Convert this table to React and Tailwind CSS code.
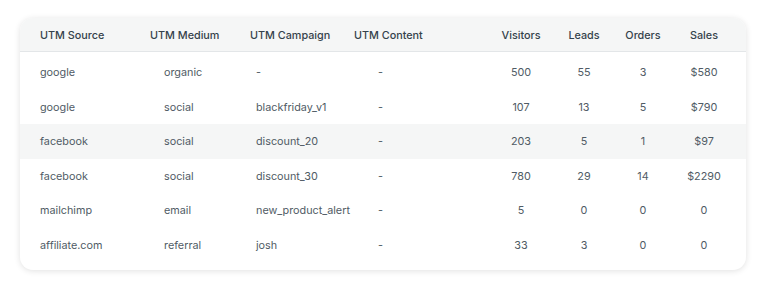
const rows = [
  ["google", "organic", "-", "-", "500", "55", "3", "$580"],
  ["google", "social", "blackfriday_v1", "-", "107", "13", "5", "$790"],
  ["facebook", "social", "discount_20", "-", "203", "5", "1", "$97"],
  ["facebook", "social", "discount_30", "-", "780", "29", "14", "$2290"],
  ["mailchimp", "email", "new_product_alert", "-", "5", "0", "0", "0"],
  ["affiliate.com", "referral", "josh", "-", "33", "3", "0", "0"],
];

const cols = "grid grid-cols-[110px_100px_104px_137px_60px_66px_52px_70px]";

const App = () => {
  return (
    <div className="w-[768px] h-[297px] bg-white pt-[18px] pl-[20px] font-['Inter',sans-serif]">
      <div className="w-[726px] h-[252px] rounded-[13px] bg-white shadow-[0_1px_6px_rgba(0,0,0,0.12)] overflow-hidden">
        <div className={`${cols} h-[34px] pt-[3px] items-center pl-[20px] bg-[#f5f6f6] border-b border-[#e3e6e8] text-[10.8px] font-medium text-[#34424b]`}>
          <div>UTM Source</div>
          <div>UTM Medium</div>
          <div>UTM Campaign</div>
          <div>UTM Content</div>
          <div className="text-center">Visitors</div>
          <div className="text-center">Leads</div>
          <div className="text-center">Orders</div>
          <div className="text-center">Sales</div>
        </div>
        <div className="pt-[3px]">
          {rows.map((r, i) => (
            <div
              key={i}
              className={`${cols} h-[34.5px] pt-[2px] items-center pl-[20px] text-[10.8px] text-[#505b65] ${i === 2 ? "bg-[#f5f6f6]" : ""}`}
            >
              <div>{r[0]}</div>
              <div className="pl-[14px]">{r[1]}</div>
              <div className="pl-[6px]">{r[2]}</div>
              <div className="pl-[24px]">{r[3]}</div>
              <div className="text-center">{r[4]}</div>
              <div className="text-center">{r[5]}</div>
              <div className="text-center">{r[6]}</div>
              <div className="text-center">{r[7]}</div>
            </div>
          ))}
        </div>
      </div>
    </div>
  );
};

export default App;
